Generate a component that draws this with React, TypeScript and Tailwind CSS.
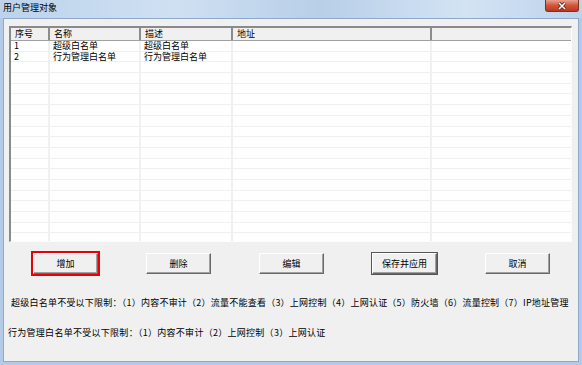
import React from "react";

const font = { fontFamily: '"Noto Sans CJK SC", "Noto Sans", sans-serif' };

const cols = [
  { w: "w-[39px]", label: "序号" },
  { w: "w-[91px]", label: "名称" },
  { w: "w-[92px]", label: "描述" },
  { w: "w-[199px]", label: "地址" },
  { w: "flex-1", label: "" },
];

const rows: string[][] = [
  ["1", "超级白名单", "超级白名单", "", ""],
  ["2", "行为管理白名单", "行为管理白名单", "", ""],
];

const Btn = ({ label, focus, dflt }: { label: string; focus?: boolean; dflt?: boolean }) => (
  <button
    className={
      "w-[65px] h-[21px] text-[9px] leading-none text-black bg-[#f0f0f0] border border-t-white border-l-white border-r-[#696969] border-b-[#696969] shadow-[inset_-1px_-1px_0_#a0a0a0] " +
      (focus ? "outline-2 outline-solid outline-[#e8000b] outline-offset-0 " : "") +
      (dflt ? "ring-1 ring-[#555]" : "")
    }
  >
    {label}
  </button>
);

export default function App() {
  const blank = Array.from({ length: 17 }, () => ["", "", "", "", ""]);
  const all = [...rows, ...blank];
  return (
    <div className="w-[582px] h-[365px] flex flex-col bg-[#b3cbe6] overflow-hidden" style={font}>
      {/* title bar */}
      <div className="h-[18px] flex items-start justify-between bg-[linear-gradient(90deg,#bcd3eb_0%,#cfe0f2_30%,#b8cfe8_55%,#d3e3f4_80%,#bdd3eb_100%)]">
        <span className="pl-[3px] pt-[2px] text-[9px] leading-[12px] text-black">用户管理对象</span>
        <div className="mr-[3px] w-[34px] h-[12px] rounded-b-[3px] border border-t-0 border-[#7a3323] bg-[linear-gradient(#e8a08e,#d0553b_50%,#c0351c)] flex items-center justify-center">
          <svg width="10" height="8" viewBox="0 0 10 8">
            <path d="M2 1 L8 7 M8 1 L2 7" stroke="#5a1a10" strokeWidth="3" />
            <path d="M2 1 L8 7 M8 1 L2 7" stroke="#fff" strokeWidth="1.6" />
          </svg>
        </div>
      </div>

      {/* client area */}
      <div className="flex-1 mx-[3px] mb-[3px] bg-[#f0f0f0] border border-[#8ea9c9] flex flex-col">
        {/* list view */}
        <div className="mt-[7px] ml-[5px] mr-[6px] h-[216px] border-t-2 border-l-2 border-t-[#8a8a8a] border-l-[#8a8a8a] border-r border-b border-r-[#fcfcfc] border-b-[#fcfcfc] bg-white flex flex-col overflow-hidden">
          <div className="h-[13px] flex bg-[#f0f0f0] border-b border-b-[#a0a0a0]">
            {cols.map((c, i) => (
              <div
                key={i}
                className={`${c.w} h-full pl-[4px] text-[9px] leading-[12px] text-black ${i < cols.length - 1 ? "border-r-2 border-r-[#8c8c8c]" : ""}`}
              >
                {c.label}
              </div>
            ))}
          </div>
          {all.map((r, ri) => (
            <div key={ri} className="h-[10.7px] shrink-0 flex border-b border-b-[#f0f0f0]">
              {cols.map((c, i) => (
                <div
                  key={i}
                  className={`${c.w} h-full pl-[3px] text-[9px] leading-[10px] text-black whitespace-nowrap ${i < cols.length - 1 ? "border-r-2 border-r-[#f0f0f0]" : ""}`}
                >
                  {r[i]}
                </div>
              ))}
            </div>
          ))}
        </div>

        {/* buttons */}
        <div className="mt-[11px] pl-[29px] flex gap-[48px]">
          <Btn label="增加" focus />
          <Btn label="删除" />
          <Btn label="编辑" />
          <Btn label="保存并应用" dflt />
          <Btn label="取消" />
        </div>

        {/* notes */}
        <div className="mt-[23px] pl-[7px] text-[9px] leading-[12px] tracking-[0.23px] text-black whitespace-nowrap">
          超级白名单不受以下限制：（1）内容不审计（2）流量不能查看（3）上网控制（4）上网认证（5）防火墙（6）流量控制（7）IP地址管理
        </div>
        <div className="mt-[18px] pl-[4px] text-[9px] leading-[12px] tracking-[0.28px] text-black whitespace-nowrap">
          行为管理白名单不受以下限制：（1）内容不审计（2）上网控制（3）上网认证
        </div>
      </div>
    </div>
  );
}
